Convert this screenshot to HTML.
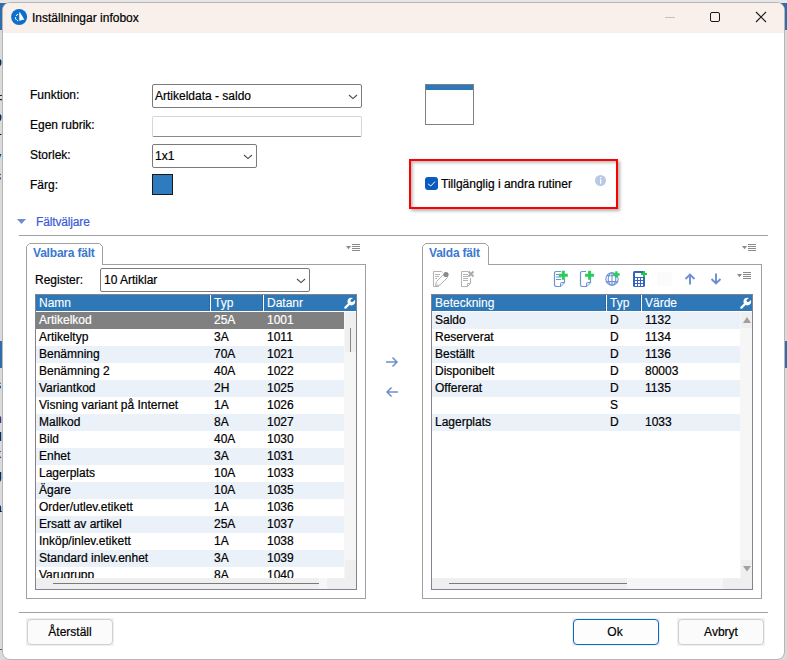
<!DOCTYPE html>
<html><head><meta charset="utf-8">
<style>
*{box-sizing:border-box;margin:0;padding:0}
html,body{width:787px;height:660px;overflow:hidden;background:#dadada;font-family:"Liberation Sans",sans-serif;font-size:12px;color:#000;position:relative;-webkit-text-stroke-width:0.2px}
.a{position:absolute}
.t{position:absolute;white-space:nowrap;line-height:16px;font-size:12px}
.combo{position:absolute;background:#fff;border:1px solid #7a7a7a;border-radius:2px}
.chev{position:absolute;width:6px;height:6px;border-right:1px solid #555;border-bottom:1px solid #555;transform:rotate(45deg)}
.grid{position:absolute;border:1px solid #828290;background:#fff;overflow:hidden}
.row{position:absolute;height:17px;overflow:hidden}
.row .c{position:absolute;top:0;line-height:17px;white-space:nowrap}
.row.b{background:#eaf1f9}
.row.sel{background:#808080;color:#fff}
.hdr{-webkit-text-stroke-width:0.1px;position:absolute;height:16px;background:#2e78b8;color:#fff}
.hdr .c{position:absolute;top:0;line-height:16px;white-space:nowrap}
.vl{position:absolute;top:0;width:1px;height:16px;background:#fff}
.panel{position:absolute;border:1px solid #a0a0a0;background:#fff}
.tab{-webkit-text-stroke-width:0;position:absolute;border:1px solid #a0a0a0;border-bottom:none;background:#fff;border-radius:4px 4px 0 0;color:#3b78d0;font-weight:bold;line-height:16px;padding-left:6px}
.btn{position:absolute;background:#fbfbfb;border:1px solid #d0d0d0;border-radius:4px;text-align:center;line-height:24px}
.btnbg{position:absolute;background:#f0f0f0}

.tabt{color:#3b78d0;font-weight:bold;-webkit-text-stroke-width:0;letter-spacing:-0.2px}

</style></head><body>
<div class="a" style="left:0;top:0;width:787px;height:3px;background:#e6e6e6"></div>
<div class="a" style="left:0;top:3px;width:12px;height:27px;background:#2f6ea8"></div>
<div class="a" style="left:775px;top:3px;width:12px;height:27px;background:#2f6ea8"></div>
<div class="a" style="left:0;top:341px;width:3px;height:27px;background:#2f6ea8"></div>
<div class="a" style="left:784px;top:341px;width:3px;height:27px;background:#2f6ea8"></div>

<div class="a" style="left:0;top:0;width:2px;height:660px;overflow:hidden"><div class="t" style="left:-5px;top:54px;color:#000">o</div><div class="t" style="left:-5px;top:92px;color:#3a0a3a">F</div><div class="t" style="left:-5px;top:109px;color:#000">o</div><div class="t" style="left:-5px;top:123px;color:#000">1</div><div class="t" style="left:-5px;top:149px;color:#000">v</div><div class="t" style="left:-5px;top:168px;color:#000">c</div><div class="t" style="left:-5px;top:377px;color:#000">s</div><div class="t" style="left:-5px;top:394px;color:#1a5ab0">:</div><div class="t" style="left:-5px;top:411px;color:#3a0a3a">n</div><div class="t" style="left:-5px;top:429px;color:#000">d</div><div class="t" style="left:-5px;top:446px;color:#3a0a3a">k</div><div class="t" style="left:-5px;top:467px;color:#000">g</div><div class="t" style="left:-5px;top:482px;color:#a03030">l</div><div class="t" style="left:-5px;top:500px;color:#000">a</div></div>
<div class="a" style="left:0;top:649px;width:2px;height:1px;background:#606060"></div>
<!-- window -->
<div class="a" style="left:2px;top:2px;width:783px;height:658px;background:#fff;border:1px solid #b6b6b6;border-radius:8px;overflow:hidden">
  <div class="a" style="left:0;top:0;width:781px;height:30px;background:#f9f0eb"></div>
</div>

<!-- title -->
<svg class="a" style="left:9px;top:7px" width="20" height="20" viewBox="0 0 20 20">
  <circle cx="10.1" cy="10" r="8" fill="#0b6fcb"/>
  <path d="M10.6 4.8 L15.3 12.6 L10.3 13.8 L10.2 7 Z" fill="#fff"/>
  <g fill="#fff"><circle cx="8.6" cy="7.4" r=".6"/><circle cx="7.5" cy="8.4" r=".6"/><circle cx="6.6" cy="10.6" r=".6"/><circle cx="6.4" cy="11.6" r=".6"/><circle cx="7.2" cy="12.4" r=".6"/><circle cx="8.6" cy="13.6" r=".7"/></g>
</svg>
<div class="t" style="left:32px;top:10px">Inställningar infobox</div>
<div class="a" style="left:665px;top:17px;width:10px;height:1px;background:#c8c2bd"></div>
<div class="a" style="left:710px;top:12px;width:10px;height:10px;border:1px solid #1a1a1a;border-radius:2px"></div>
<svg class="a" style="left:755px;top:11px" width="12" height="12" viewBox="0 0 12 12"><path d="M1 1 L11 11 M11 1 L1 11" stroke="#1a1a1a" stroke-width="1.1"/></svg>

<!-- form -->
<div class="t" style="left:30px;top:87px">Funktion:</div>
<div class="t" style="left:30px;top:117px">Egen rubrik:</div>
<div class="t" style="left:30px;top:147px">Storlek:</div>
<div class="t" style="left:30px;top:177px">Färg:</div>

<div class="combo" style="left:152px;top:84px;width:210px;height:24px"></div>
<div class="t" style="left:155px;top:88px">Artikeldata - saldo</div>
<svg class="a" style="left:348px;top:93px" width="10" height="7" viewBox="0 0 10 7"><path d="M1 2 L5 5.6 L9 2" fill="none" stroke="#4a4a4a" stroke-width="1.1"/></svg>

<div class="a" style="left:152px;top:116px;width:210px;height:21px;border:1px solid #d6d6d6;border-bottom-color:#8a8a8a;border-radius:2px"></div>

<div class="combo" style="left:152px;top:144px;width:105px;height:24px"></div>
<div class="t" style="left:155px;top:148px">1x1</div>
<svg class="a" style="left:243px;top:153px" width="10" height="7" viewBox="0 0 10 7"><path d="M1 2 L5 5.6 L9 2" fill="none" stroke="#4a4a4a" stroke-width="1.1"/></svg>

<div class="a" style="left:152px;top:174px;width:21px;height:21px;background:#2e7bc0;border:1px solid #1a1a1a"></div>

<!-- preview -->
<div class="a" style="left:425px;top:84px;width:49px;height:41px;border:1px solid #80808a;background:#fff"></div>
<div class="a" style="left:426px;top:85px;width:47px;height:5px;background:#2e78b8"></div>

<!-- red box -->
<div class="a" style="left:409px;top:159px;width:209px;height:50px;border:2px solid #f00;box-shadow:inset 2px 2px 3px rgba(0,0,0,.25),2px 2px 3px rgba(0,0,0,.3)"></div>
<div class="a" style="left:425px;top:177px;width:13px;height:13px;background:#0c5cc0;border-radius:3px"></div>
<svg class="a" style="left:425px;top:177px" width="13" height="13" viewBox="0 0 13 13"><path d="M3.1 6.9 L5.8 9 L10 4.6" fill="none" stroke="#fff" stroke-width="1"/></svg>
<div class="t" style="left:441px;top:176px">Tillgänglig i andra rutiner</div>
<svg class="a" style="left:595px;top:175px" width="11" height="11" viewBox="0 0 11 11"><circle cx="5.5" cy="5.5" r="5.5" fill="#b9c9e3"/><rect x="5" y="2" width="1.2" height="1.3" fill="#fff"/><rect x="5" y="4.2" width="1.2" height="4.5" fill="#fff"/></svg>

<!-- Fältväljare -->
<svg class="a" style="left:17px;top:219px" width="10" height="6" viewBox="0 0 10 6"><path d="M0 0 L9 0 L4.5 5 Z" fill="#6b8fcf"/></svg>
<div class="t" style="left:36px;top:214px;color:#3a5cd8;letter-spacing:-0.15px">Fältväljare</div>
<div class="a" style="left:19px;top:235px;width:749px;height:1px;background:#a0a0a0"></div>

<!-- left panel -->
<div class="panel" style="left:26px;top:264px;width:340px;height:335px"></div>
<svg class="a" style="left:26px;top:243px" width="77" height="22" viewBox="0 0 77 22"><path d="M0.5 22 V3.5 L3.5 0.5 H73.5 L76.5 3.5 V22" fill="#fff" stroke="#a0a0a0" stroke-width="1"/></svg><div class="t tabt" style="left:33px;top:245px">Valbara fält</div>
<svg class="a" style="left:345px;top:243px" width="16" height="8" viewBox="0 0 16 8"><path d="M1 3 L6 3 L3.5 6.2Z" fill="#8a8a8a"/><path d="M7 1.5H15M7 3.5H15M7 5.5H15M7 7.5H15" stroke="#8a8a8a" stroke-width="1"/></svg>
<div class="t" style="left:35px;top:272px">Register:</div>
<div class="combo" style="left:100px;top:268px;width:210px;height:24px"></div>
<div class="t" style="left:104px;top:272px">10 Artiklar</div>
<svg class="a" style="left:296px;top:277px" width="10" height="7" viewBox="0 0 10 7"><path d="M1 2 L5 5.6 L9 2" fill="none" stroke="#4a4a4a" stroke-width="1.1"/></svg>

<div class="grid" style="left:35px;top:294px;width:322px;height:296px"></div>
<div class="hdr" style="left:36px;top:295px;width:320px">
  <span class="c" style="left:3px">Namn</span>
  <div class="vl" style="left:173px;background:#2868a4"></div><div class="vl" style="left:174px"></div><span class="c" style="left:178px">Typ</span>
  <div class="vl" style="left:226px;background:#2868a4"></div><div class="vl" style="left:227px"></div><span class="c" style="left:231px">Datanr</span>
</div>
<div class="a" style="left:36px;top:311px;width:320px;height:1px;background:#fff"></div>
<div class="row sel" style="left:36px;top:312px;width:308px;height:17px"><span class="c" style="left:3px">Artikelkod</span><span class="c" style="left:178px">25A</span><span class="c" style="left:231px">1001</span></div>
<div class="row" style="left:36px;top:329px;width:308px;height:17px"><span class="c" style="left:3px">Artikeltyp</span><span class="c" style="left:178px">3A</span><span class="c" style="left:231px">1011</span></div>
<div class="row b" style="left:36px;top:346px;width:308px;height:17px"><span class="c" style="left:3px">Benämning</span><span class="c" style="left:178px">70A</span><span class="c" style="left:231px">1021</span></div>
<div class="row" style="left:36px;top:363px;width:308px;height:17px"><span class="c" style="left:3px">Benämning 2</span><span class="c" style="left:178px">40A</span><span class="c" style="left:231px">1022</span></div>
<div class="row b" style="left:36px;top:380px;width:308px;height:17px"><span class="c" style="left:3px">Variantkod</span><span class="c" style="left:178px">2H</span><span class="c" style="left:231px">1025</span></div>
<div class="row" style="left:36px;top:397px;width:308px;height:17px"><span class="c" style="left:3px">Visning variant på Internet</span><span class="c" style="left:178px">1A</span><span class="c" style="left:231px">1026</span></div>
<div class="row b" style="left:36px;top:414px;width:308px;height:17px"><span class="c" style="left:3px">Mallkod</span><span class="c" style="left:178px">8A</span><span class="c" style="left:231px">1027</span></div>
<div class="row" style="left:36px;top:431px;width:308px;height:17px"><span class="c" style="left:3px">Bild</span><span class="c" style="left:178px">40A</span><span class="c" style="left:231px">1030</span></div>
<div class="row b" style="left:36px;top:448px;width:308px;height:17px"><span class="c" style="left:3px">Enhet</span><span class="c" style="left:178px">3A</span><span class="c" style="left:231px">1031</span></div>
<div class="row" style="left:36px;top:465px;width:308px;height:17px"><span class="c" style="left:3px">Lagerplats</span><span class="c" style="left:178px">10A</span><span class="c" style="left:231px">1033</span></div>
<div class="row b" style="left:36px;top:482px;width:308px;height:17px"><span class="c" style="left:3px">Ägare</span><span class="c" style="left:178px">10A</span><span class="c" style="left:231px">1035</span></div>
<div class="row" style="left:36px;top:499px;width:308px;height:17px"><span class="c" style="left:3px">Order/utlev.etikett</span><span class="c" style="left:178px">1A</span><span class="c" style="left:231px">1036</span></div>
<div class="row b" style="left:36px;top:516px;width:308px;height:17px"><span class="c" style="left:3px">Ersatt av artikel</span><span class="c" style="left:178px">25A</span><span class="c" style="left:231px">1037</span></div>
<div class="row" style="left:36px;top:533px;width:308px;height:17px"><span class="c" style="left:3px">Inköp/inlev.etikett</span><span class="c" style="left:178px">1A</span><span class="c" style="left:231px">1038</span></div>
<div class="row b" style="left:36px;top:550px;width:308px;height:17px"><span class="c" style="left:3px">Standard inlev.enhet</span><span class="c" style="left:178px">3A</span><span class="c" style="left:231px">1039</span></div>
<div class="row" style="left:36px;top:567px;width:308px;height:11px"><span class="c" style="left:3px">Varugrupp</span><span class="c" style="left:178px">8A</span><span class="c" style="left:231px">1040</span></div>
<div class="a" style="left:344px;top:312px;width:12px;height:266px;background:#f6f6f6"></div>
<div class="a" style="left:345px;top:312px;width:11px;height:40px;background:#efefef"></div>
<div class="a" style="left:345px;top:560px;width:11px;height:18px;background:#efefef"></div>
<div class="a" style="left:350px;top:328px;width:1px;height:24px;background:#858585"></div>
<div class="a" style="left:36px;top:578px;width:320px;height:11px;background:#efefef"></div>
<div class="a" style="left:319px;top:578px;width:8px;height:11px;background:#f6f6f6"></div>
<div class="a" style="left:53px;top:583px;width:266px;height:1px;background:#7a7a7a"></div>

<!-- arrows -->
<svg class="a" style="left:385px;top:356px" width="14" height="12" viewBox="0 0 14 12"><path d="M1 6 H12 M7.5 1.5 L12 6 L7.5 10.5" fill="none" stroke="#6d8fca" stroke-width="1.5"/></svg>
<svg class="a" style="left:385px;top:386px" width="14" height="12" viewBox="0 0 14 12"><path d="M13 6 H2 M6.5 1.5 L2 6 L6.5 10.5" fill="none" stroke="#6d8fca" stroke-width="1.5"/></svg>

<!-- right panel -->
<div class="panel" style="left:422px;top:264px;width:340px;height:335px"></div>
<svg class="a" style="left:422px;top:243px" width="67" height="22" viewBox="0 0 67 22"><path d="M0.5 22 V3.5 L3.5 0.5 H63.5 L66.5 3.5 V22" fill="#fff" stroke="#a0a0a0" stroke-width="1"/></svg><div class="t tabt" style="left:429px;top:245px">Valda fält</div>
<svg class="a" style="left:741px;top:243px" width="16" height="8" viewBox="0 0 16 8"><path d="M1 3 L6 3 L3.5 6.2Z" fill="#8a8a8a"/><path d="M7 1.5H15M7 3.5H15M7 5.5H15M7 7.5H15" stroke="#8a8a8a" stroke-width="1"/></svg>
<svg class="a" style="left:736px;top:271px" width="16" height="8" viewBox="0 0 16 8"><path d="M1 3 L6 3 L3.5 6.2Z" fill="#8a8a8a"/><path d="M7 1.5H15M7 3.5H15M7 5.5H15M7 7.5H15" stroke="#8a8a8a" stroke-width="1"/></svg>

<div class="grid" style="left:431px;top:294px;width:322px;height:296px"></div>
<div class="hdr" style="left:432px;top:295px;width:320px">
  <span class="c" style="left:3px">Beteckning</span>
  <div class="vl" style="left:173px;background:#2868a4"></div><div class="vl" style="left:174px"></div><span class="c" style="left:178px">Typ</span>
  <div class="vl" style="left:208px;background:#2868a4"></div><div class="vl" style="left:209px"></div><span class="c" style="left:213px">Värde</span>
</div>
<div class="a" style="left:432px;top:311px;width:320px;height:1px;background:#fff"></div>
<div class="row b" style="left:432px;top:312px;width:308px;height:17px"><span class="c" style="left:3px">Saldo</span><span class="c" style="left:178px">D</span><span class="c" style="left:213px">1132</span></div>
<div class="row" style="left:432px;top:329px;width:308px;height:17px"><span class="c" style="left:3px">Reserverat</span><span class="c" style="left:178px">D</span><span class="c" style="left:213px">1134</span></div>
<div class="row b" style="left:432px;top:346px;width:308px;height:17px"><span class="c" style="left:3px">Beställt</span><span class="c" style="left:178px">D</span><span class="c" style="left:213px">1136</span></div>
<div class="row" style="left:432px;top:363px;width:308px;height:17px"><span class="c" style="left:3px">Disponibelt</span><span class="c" style="left:178px">D</span><span class="c" style="left:213px">80003</span></div>
<div class="row b" style="left:432px;top:380px;width:308px;height:17px"><span class="c" style="left:3px">Offererat</span><span class="c" style="left:178px">D</span><span class="c" style="left:213px">1135</span></div>
<div class="row" style="left:432px;top:397px;width:308px;height:17px"><span class="c" style="left:3px"></span><span class="c" style="left:178px">S</span><span class="c" style="left:213px"></span></div>
<div class="row b" style="left:432px;top:414px;width:308px;height:17px"><span class="c" style="left:3px">Lagerplats</span><span class="c" style="left:178px">D</span><span class="c" style="left:213px">1033</span></div>
<div class="a" style="left:740px;top:312px;width:12px;height:266px;background:#f6f6f6"></div>
<div class="a" style="left:741px;top:312px;width:11px;height:16px;background:#efefef"></div>
<div class="a" style="left:741px;top:560px;width:11px;height:18px;background:#efefef"></div>
<div class="a" style="left:432px;top:578px;width:320px;height:11px;background:#efefef"></div>
<div class="a" style="left:627px;top:578px;width:96px;height:11px;background:#f6f6f6"></div>
<div class="a" style="left:449px;top:583px;width:178px;height:1px;background:#7a7a7a"></div>

<!-- bottom -->
<div class="a" style="left:19px;top:612px;width:749px;height:1px;background:#a0a0a0"></div>
<div class="btnbg" style="left:26px;top:618px;width:88px;height:28px"></div>
<div class="btn" style="left:27px;top:619px;width:86px;height:26px">Återställ</div>
<div class="btnbg" style="left:572px;top:618px;width:88px;height:28px"></div>
<div class="btn" style="left:573px;top:619px;width:86px;height:26px;border:1.5px solid #0a67c2;background:#fdfdfd;padding-right:2px">Ok</div>
<div class="btnbg" style="left:677px;top:618px;width:88px;height:28px"></div>
<div class="btn" style="left:678px;top:619px;width:86px;height:26px">Avbryt</div>

<!-- wrenches -->
<svg class="a" style="left:344px;top:297px" width="12" height="12" viewBox="0 0 12 12"><circle cx="7.3" cy="4.6" r="3.8" fill="#fff"/><circle cx="8" cy="3.6" r="1.5" fill="#2e78b8"/><path d="M7.2 2.8 L9.8 0 L12 2.2 L8.8 4.4Z" fill="#2e78b8"/><path d="M5.5 6.5 L1.4 10.6" stroke="#fff" stroke-width="2.3" stroke-linecap="round"/></svg>
<svg class="a" style="left:740px;top:297px" width="12" height="12" viewBox="0 0 12 12"><circle cx="7.3" cy="4.6" r="3.8" fill="#fff"/><circle cx="8" cy="3.6" r="1.5" fill="#2e78b8"/><path d="M7.2 2.8 L9.8 0 L12 2.2 L8.8 4.4Z" fill="#2e78b8"/><path d="M5.5 6.5 L1.4 10.6" stroke="#fff" stroke-width="2.3" stroke-linecap="round"/></svg>
<svg class="a" style="left:743px;top:317px" width="8" height="6" viewBox="0 0 8 6"><path d="M0 6 L4 0 L8 6Z" fill="#a0a0a0"/></svg>
<svg class="a" style="left:743px;top:566px" width="8" height="6" viewBox="0 0 8 6"><path d="M0 0 L4 5.5 L8 0Z" fill="#a0a0a0"/></svg>
<!-- toolbar -->
<svg class="a" style="left:432px;top:270px" width="18" height="18" viewBox="0 0 18 18">
 <path d="M1.5 1.5 H9.5 L10.5 2.5 M1.5 1.5 V16.5 H7" fill="none" stroke="#b4b4b4" stroke-width="1"/>
 <path d="M3 4.5 H8 M3 6.5 H7 M3 8.5 H5" stroke="#b4b4b4" stroke-width="1"/>
 <path d="M3.5 15.5 L4.5 11.5 L12 4 L15.5 7.5 L8 15 Z" fill="#fff" stroke="#b0b0b0" stroke-width="1"/>
 <circle cx="14" cy="4.5" r="2.6" fill="#8a8a8a"/>
</svg>
<svg class="a" style="left:460px;top:270px" width="18" height="18" viewBox="0 0 18 18">
 <path d="M1.5 1.5 H8 M1.5 1.5 V16.5 H7.5 L10.5 13.5 V8" fill="none" stroke="#b4b4b4" stroke-width="1"/>
 <path d="M7.5 16.5 V13.5 H10.5" fill="none" stroke="#b4b4b4" stroke-width="1"/>
 <path d="M3 4.5 H8 M3 6.5 H8 M3 8.5 H8 M3 10.5 H8" stroke="#b4b4b4" stroke-width="1"/>
 <path d="M8.5 1.5 L13.5 6.5 M13.5 1.5 L8.5 6.5" stroke="#a8a8a8" stroke-width="1.8"/>
</svg>
<svg class="a" style="left:553px;top:270px" width="18" height="18" viewBox="0 0 18 18">
 <path d="M8 1.5 H3.2 Q1.5 1.5 1.5 3.2 V14.8 Q1.5 16.5 3.2 16.5 H7.5 L11.5 12.5 V9" fill="none" stroke="#6e92d6" stroke-width="1.2"/>
 <path d="M7.5 16.5 V13.5 Q7.5 12.5 8.5 12.5 H11.5" fill="#dfe8f8" stroke="#6e92d6" stroke-width="1"/>
 <path d="M3 4.5 H8 M3 7 H8 M3 9.5 H8" stroke="#6e92d6" stroke-width="1"/>
 <path d="M10.3 0.8 V9.8 M5.8 5.3 H14.8" stroke="#2ccb5c" stroke-width="3"/>
</svg>
<svg class="a" style="left:579px;top:270px" width="18" height="18" viewBox="0 0 18 18">
 <path d="M7 1.5 H3.2 Q1.5 1.5 1.5 3.2 V14.8 Q1.5 16.5 3.2 16.5 H7.5 L11.5 12.5 V9" fill="none" stroke="#6e92d6" stroke-width="1.2"/>
 <path d="M7.5 16.5 V13.5 Q7.5 12.5 8.5 12.5 H11.5" fill="#dfe8f8" stroke="#6e92d6" stroke-width="1"/>
 <path d="M10.6 0.8 V9.8 M6.1 5.3 H15.1" stroke="#2ccb5c" stroke-width="3"/>
</svg>
<svg class="a" style="left:604px;top:270px" width="18" height="18" viewBox="0 0 18 18">
 <g fill="none" stroke="#6e92d6" stroke-width="1.1"><circle cx="8" cy="9" r="6.2"/><ellipse cx="8" cy="9" rx="3.8" ry="6.2"/><path d="M8 2.8 V15.2 M2.6 5.8 H13.4 M2.4 11.6 H13.6"/></g>
 <path d="M12.4 1.2 V7.8 M9.1 4.5 H15.7" stroke="#2ccb5c" stroke-width="2.4"/>
</svg>
<svg class="a" style="left:632px;top:270px" width="18" height="18" viewBox="0 0 18 18">
 <rect x="1" y="1" width="12" height="16" rx="1.5" fill="#3563c4"/>
 <rect x="3" y="3" width="8" height="4" fill="#fff"/>
 <g fill="#fff"><rect x="3" y="8" width="2" height="2"/><rect x="6" y="8" width="2" height="2"/><rect x="9" y="8" width="2" height="2"/><rect x="3" y="11" width="2" height="2"/><rect x="6" y="11" width="2" height="2"/><rect x="9" y="11" width="2" height="2"/><rect x="3" y="14" width="2" height="2"/><rect x="6" y="14" width="2" height="2"/><rect x="9" y="14" width="2" height="2"/></g>
 <path d="M12 1 V7 M9 4 H15" stroke="#22c74c" stroke-width="2"/>
</svg>
<div class="a" style="left:657px;top:272px;width:15px;height:14px;background:#fbfbfb;border-radius:2px"></div>
<svg class="a" style="left:684px;top:273px" width="12" height="12" viewBox="0 0 12 12"><path d="M6 11.5 V1.5 M1.5 6 L6 1.5 L10.5 6" fill="none" stroke="#6b8fd2" stroke-width="1.9"/></svg>
<svg class="a" style="left:710px;top:273px" width="12" height="12" viewBox="0 0 12 12"><path d="M6 0.5 V10.5 M1.5 6 L6 10.5 L10.5 6" fill="none" stroke="#6b8fd2" stroke-width="1.9"/></svg>

</body></html>
